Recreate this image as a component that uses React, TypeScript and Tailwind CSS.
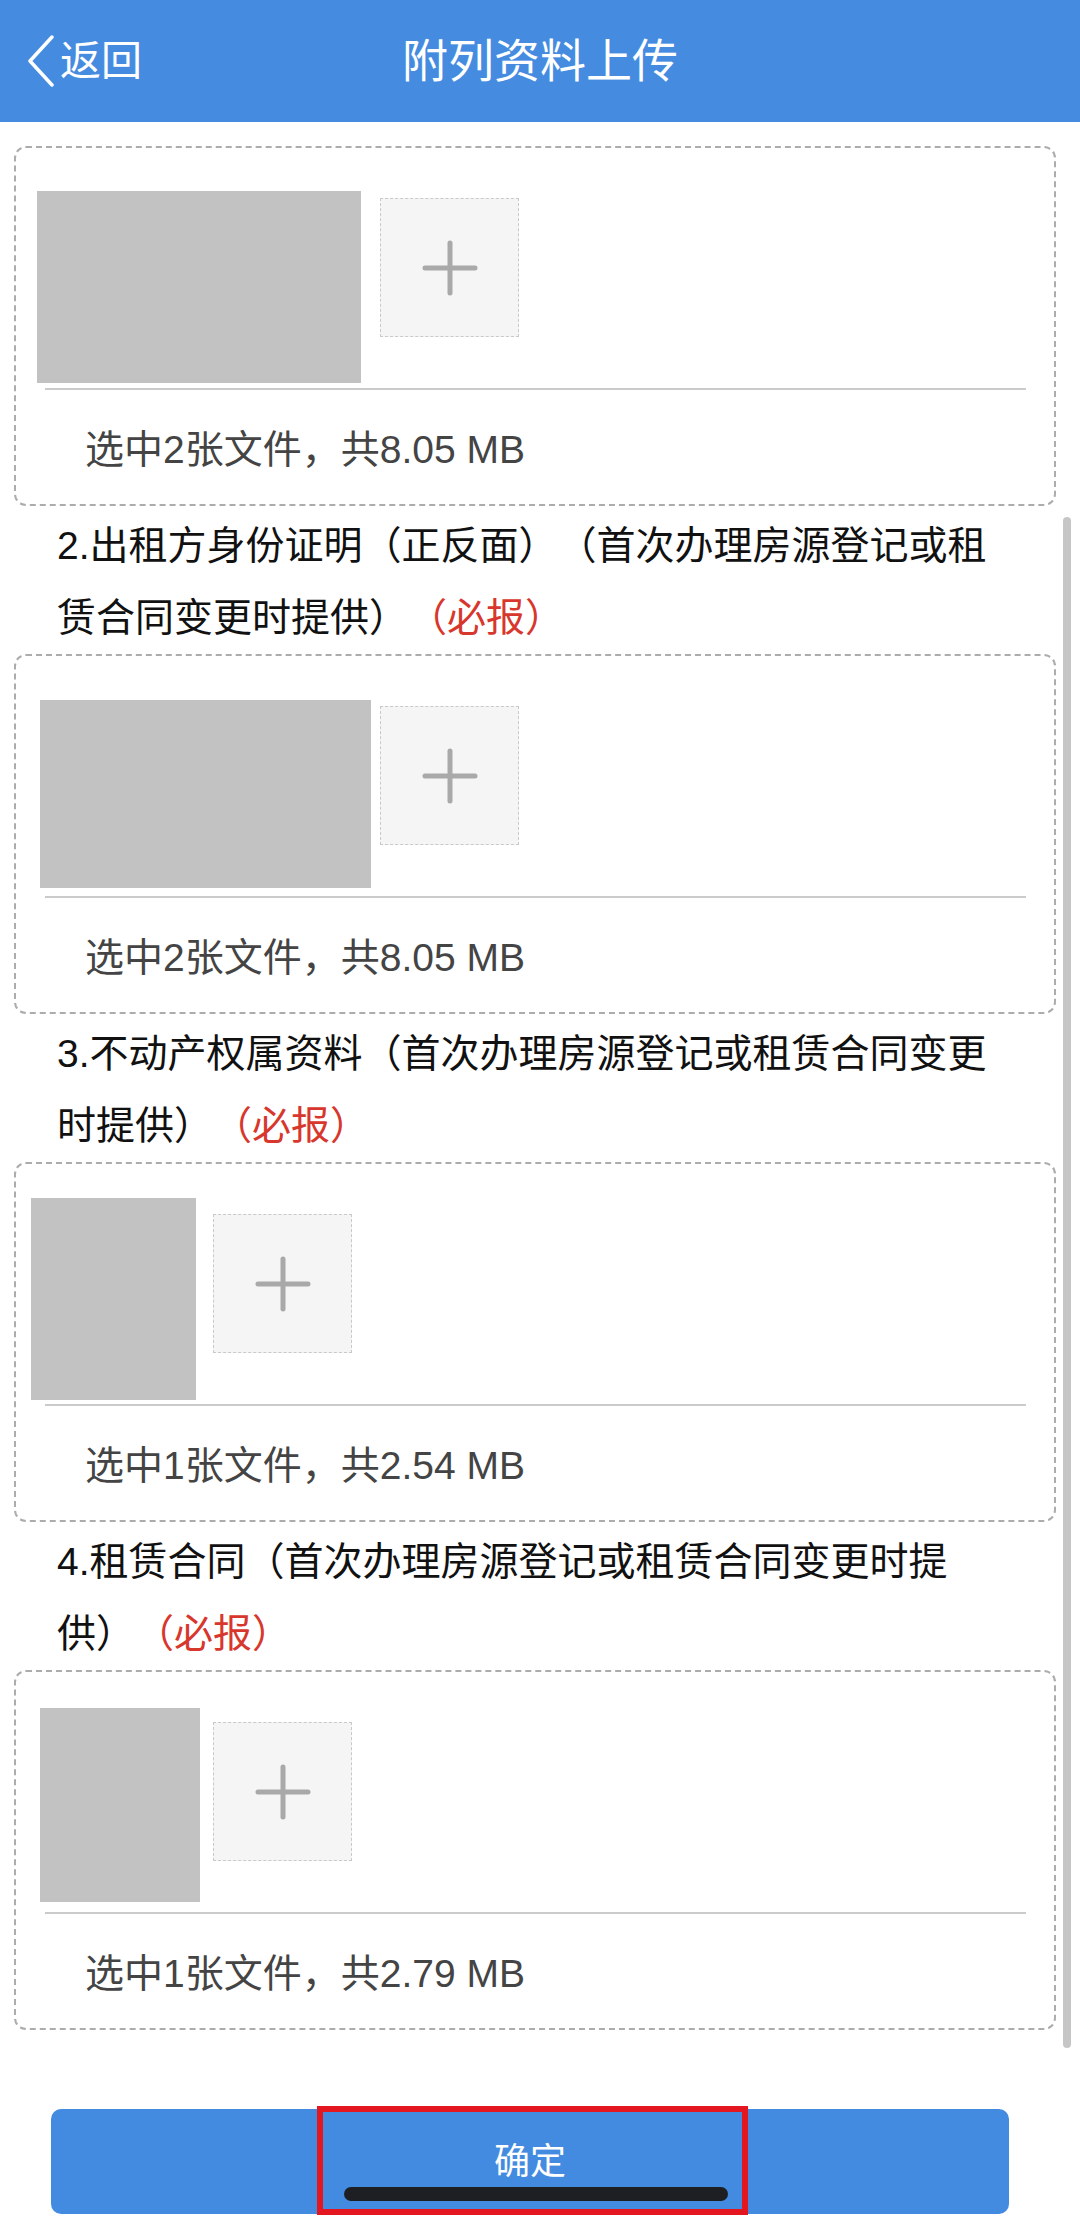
import React from "react";

type Item = {
  title: string;
  imgClass: string;
  plusClass: string;
  info: string;
};

const items: Item[] = [
  {
    title: "",
    imgClass: "mt-[43px] ml-[21px] w-[324px] h-[192px]",
    plusClass: "ml-[19px]",
    info: "选中2张文件，共8.05 MB",
  },
  {
    title: "2.出租方身份证明（正反面）（首次办理房源登记或租赁合同变更时提供）",
    imgClass: "mt-[44px] ml-[24px] w-[331px] h-[188px]",
    plusClass: "ml-[9px]",
    info: "选中2张文件，共8.05 MB",
  },
  {
    title: "3.不动产权属资料（首次办理房源登记或租赁合同变更时提供）",
    imgClass: "mt-[34px] ml-[15px] w-[165px] h-[202px]",
    plusClass: "ml-[17px]",
    info: "选中1张文件，共2.54 MB",
  },
  {
    title: "4.租赁合同（首次办理房源登记或租赁合同变更时提供）",
    imgClass: "mt-[36px] ml-[24px] w-[160px] h-[194px]",
    plusClass: "ml-[13px]",
    info: "选中1张文件，共2.79 MB",
  },
];

function AddBox({ className }: { className: string }) {
  return (
    <div
      className={`mt-[50px] w-[139px] h-[139px] shrink-0 border-[1.5px] border-dashed border-[#c9c9c9] bg-[#f5f5f5] flex items-center justify-center ${className}`}
    >
      <svg width="56" height="56" viewBox="0 0 56 56">
        <path d="M28 3V53M3 28H53" stroke="#a9a9a9" strokeWidth="5" strokeLinecap="round" />
      </svg>
    </div>
  );
}

function UploadCard({ item }: { item: Item }) {
  return (
    <div className="border-2 border-dashed border-[#acacac] rounded-[12px]">
      <div className="h-[240px] flex items-start">
        <div className={`shrink-0 bg-[#c2c2c2] ${item.imgClass}`} />
        <AddBox className={item.plusClass} />
      </div>
      <div className="ml-[29px] mr-[28px] h-[2px] bg-[#cbcbcb]" />
      <div className="pl-[69px] pt-[35px] pb-[29px] text-[39px] leading-[50px] text-[#444]">
        {item.info}
      </div>
    </div>
  );
}

export default function App() {
  return (
    <div className="relative w-[1080px] h-[2222px] overflow-hidden bg-white [text-spacing-trim:space-all] font-['Liberation_Sans','Noto_Sans_CJK_SC',sans-serif]">
      <header className="h-[122px] bg-[#458ce1] grid grid-cols-[1fr_auto_1fr] items-center text-white">
        <div className="flex items-center pl-[27px]">
          <svg width="28" height="52" viewBox="0 0 28 52">
            <path d="M25 2L3 26L25 50" fill="none" stroke="white" strokeWidth="3.5" strokeLinecap="round" strokeLinejoin="round" />
          </svg>
          <span className="ml-[5px] text-[41px] leading-none">返回</span>
        </div>
        <h1 className="text-[46px] leading-none font-normal">附列资料上传</h1>
        <div />
      </header>

      <main className="pl-[14px] pr-[24px] pt-[24px]">
        {items.map((item, i) => (
          <div key={i}>
            {item.title && (
              <p className="mt-[4px] pl-[43px] pr-[46px] text-[39px] leading-[72px] text-[#111]">
                {item.title}
                <span className="text-[#d7372c]">（必报）</span>
              </p>
            )}
            <UploadCard item={item} />
          </div>
        ))}
      </main>

      <div className="pl-[51px] pr-[71px] mt-[79px]">
        <button className="w-full h-[105px] rounded-[10px] bg-[#438be1] text-white text-[36px] flex items-center justify-center">
          确定
        </button>
      </div>

      {/* scroll indicator */}
      <div className="absolute left-[1063px] top-[517px] w-[8px] h-[1531px] rounded-full bg-[#c6c6c6]" />

      {/* annotation box + home indicator */}
      <div className="absolute left-[317px] top-[2106px] w-[431px] h-[109px] border-[6px] border-[#e4161f]" />
      <div className="absolute left-[344px] top-[2187px] w-[384px] h-[14px] rounded-full bg-[#1e1f22]" />
    </div>
  );
}
